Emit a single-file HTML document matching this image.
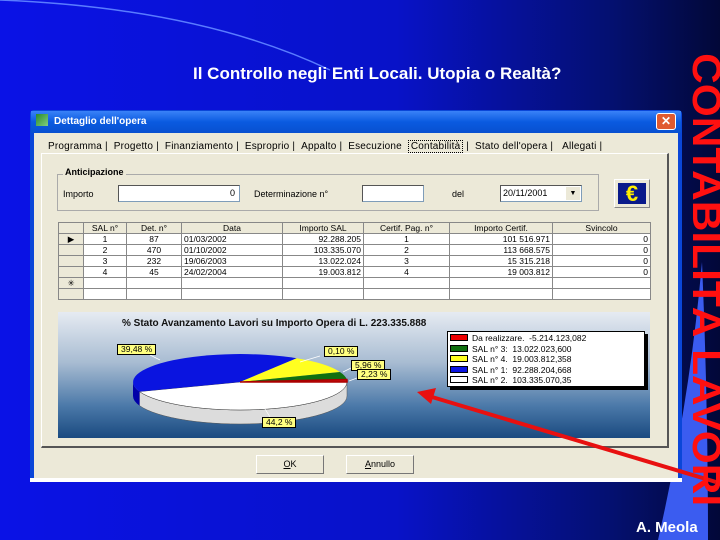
<!DOCTYPE html>
<html><head><meta charset="utf-8"><style>
*{margin:0;padding:0;box-sizing:border-box}
body{width:720px;height:540px;overflow:hidden;position:relative;font-family:"Liberation Sans",sans-serif;background:linear-gradient(90deg,#0a12e6 0%,#0812c8 55%,#041070 85%,#020838 100%)}
.a{position:absolute}
.t{font-size:9px;color:#000;white-space:nowrap}
.in{background:#fff;border:1px solid #7f9db9;border-top-color:#555;border-left-color:#555}
table{border-collapse:collapse;font-size:8.5px}
td{border:1px solid #888;height:11px;padding:0 2px;line-height:10px}
.hd td{background:#ece9d8;text-align:center}
.rh{background:#ece9d8;width:25px}
.lab{position:absolute;background:#ffff80;border:1px solid #000;font-size:8.5px;padding:0 3px;line-height:9px;height:11px}
</style></head><body>
<svg class="a" style="left:0;top:0" width="720" height="540">
<path d="M0,0 Q200,8 330,70" stroke="#5a7cff" stroke-width="1.5" fill="none"/>
<path d="M702,262 Q690,400 658,540 L708,540 Q708,400 702,262Z" fill="#3b5cf0"/>
</svg>
<div class="a" style="left:193px;top:64px;font-size:17px;font-weight:bold;color:#fff">Il Controllo negli Enti Locali. Utopia o Realtà?</div>
<div class="a" style="left:636px;top:519px;font-size:15px;font-weight:bold;color:#fff">A. Meola</div>

<!-- window -->
<div class="a" style="left:30px;top:110px;width:652px;height:372px;background:#0a46d8;border-radius:4px 4px 0 0"></div>
<div class="a" style="left:31px;top:111px;width:650px;height:22px;background:linear-gradient(#3a82f8,#0a5ae0 50%,#0850d0)"></div>
<div class="a" style="left:36px;top:114px;width:12px;height:12px;background:linear-gradient(135deg,#2a8a2a,#80d080)"></div>
<div class="a" style="left:54px;top:116px;font-size:10px;font-weight:bold;color:#fff">Dettaglio dell'opera</div>
<div class="a" style="left:656px;top:113px;width:20px;height:17px;background:#e05a30;border:1px solid #fff;border-radius:3px;color:#fff;font-size:12px;text-align:center;line-height:14px;font-weight:bold">✕</div>
<div class="a" style="left:34px;top:133px;width:644px;height:345px;background:#ece9d8"></div>
<div class="a" style="left:30px;top:478px;width:652px;height:4px;background:#fff"></div>

<!-- tabs -->
<div class="a t" style="left:48px;top:141px;font-size:10px;letter-spacing:0.2px">Programma&nbsp;|&nbsp;&nbsp;Progetto&nbsp;|&nbsp;&nbsp;Finanziamento&nbsp;|&nbsp;&nbsp;Esproprio&nbsp;|&nbsp;&nbsp;Appalto&nbsp;|&nbsp;&nbsp;Esecuzione&nbsp;&nbsp;<span style="border:1px dotted #000;padding:0 2px">Contabilità</span>&nbsp;|&nbsp;&nbsp;Stato dell'opera&nbsp;|&nbsp;&nbsp;&nbsp;Allegati&nbsp;|</div>
<div class="a" style="left:41px;top:153px;width:628px;height:295px;border-left:1px solid #fff;border-top:1px solid #fff;border-right:2px solid #555;border-bottom:2px solid #555"></div>

<!-- group -->
<div class="a" style="left:57px;top:174px;width:542px;height:37px;border:1px solid #aaa"></div>
<div class="a t" style="left:63px;top:167px;background:#ece9d8;font-weight:bold;padding:0 2px">Anticipazione</div>
<div class="a t" style="left:63px;top:189px">Importo</div>
<div class="a in" style="left:118px;top:185px;width:122px;height:17px"><span class="t" style="position:absolute;right:4px;top:2px">0</span></div>
<div class="a t" style="left:254px;top:189px">Determinazione n°</div>
<div class="a in" style="left:362px;top:185px;width:62px;height:17px"></div>
<div class="a t" style="left:452px;top:189px">del</div>
<div class="a in" style="left:500px;top:185px;width:82px;height:17px"><span class="t" style="position:absolute;left:2px;top:2px">20/11/2001</span><div class="a" style="right:1px;top:1px;width:14px;height:13px;background:#ece9d8;font-size:7px;text-align:center;line-height:13px">▼</div></div>
<div class="a" style="left:614px;top:179px;width:36px;height:29px;background:#ece9d8;border:1px solid #fff;border-right-color:#888;border-bottom-color:#888;padding:3px"><div style="width:28px;height:21px;background:#0a1a8a;color:#ffee00;font-size:22px;font-weight:bold;text-align:center;line-height:21px">€</div></div>

<!-- table -->
<table class="a" style="left:58px;top:222px;width:593px;background:#fff">
<tr class="hd"><td class="rh"></td><td style="width:43px">SAL n°</td><td style="width:55px">Det. n°</td><td style="width:101px">Data</td><td style="width:81px">Importo SAL</td><td style="width:86px">Certif. Pag. n°</td><td style="width:103px">Importo Certif.</td><td>Svincolo</td></tr>
<tr><td class="rh" style="text-align:center">▶</td><td align="center">1</td><td align="center">87</td><td>01/03/2002</td><td align="right">92.288.205</td><td align="center">1</td><td align="right">101 516.971</td><td align="right">0</td></tr>
<tr><td class="rh"></td><td align="center">2</td><td align="center">470</td><td>01/10/2002</td><td align="right">103.335.070</td><td align="center">2</td><td align="right">113 668.575</td><td align="right">0</td></tr>
<tr><td class="rh"></td><td align="center">3</td><td align="center">232</td><td>19/06/2003</td><td align="right">13.022.024</td><td align="center">3</td><td align="right">15 315.218</td><td align="right">0</td></tr>
<tr><td class="rh"></td><td align="center">4</td><td align="center">45</td><td>24/02/2004</td><td align="right">19.003.812</td><td align="center">4</td><td align="right">19 003.812</td><td align="right">0</td></tr>
<tr><td class="rh" style="text-align:center">✳</td><td></td><td></td><td></td><td></td><td></td><td></td><td></td></tr>
<tr><td class="rh"></td><td></td><td></td><td></td><td></td><td></td><td></td><td></td></tr>
</table>

<!-- chart -->
<div class="a" style="left:58px;top:312px;width:592px;height:126px;background:linear-gradient(#e6ebf2,#a8bcd2 40%,#4a78a8 75%,#1a4a80)"></div>
<div class="a" style="left:122px;top:318px;font-size:10px;font-weight:bold;color:#111">% Stato Avanzamento Lavori su Importo Opera di L. 223.335.888</div>
<svg class="a" style="left:0;top:0" width="720" height="540">
<path d="M347,382 A107 28 0 0 1 139.5,391.6 L139.5,405.6 A107 28 0 0 0 347,396Z" fill="#dcdcdc" stroke="#555" stroke-width=".5"/>
<path d="M139.5,391.6 A107 28 0 0 1 133,382 L133,396 A107 28 0 0 0 139.5,405.6Z" fill="#0000a8"/>
<path d="M240,382 L347,382 A107 28 0 0 1 139.5,391.6Z" fill="#fff" stroke="#333" stroke-width=".5"/>
<path d="M240,382 L139.5,391.6 A107 28 0 0 1 296.7,358.3Z" fill="#0a14e0"/>
<path d="M240,382 L296.7,358.3 A107 28 0 0 1 339.9,372Z" fill="#ffff20"/>
<path d="M240,382 L339.9,372 A107 28 0 0 1 346.9,379.5Z" fill="#107010"/>
<path d="M240,382 L346.9,379.5 A107 28 0 0 1 347,382Z" fill="#d01010" stroke="#a00" stroke-width="1.5"/>
<path d="M150,355 L160,360 M320,356 L300,362 M351,368 L343,372 M357,378 L349,381 M270,417 L262,404" stroke="#fff" stroke-width=".7"/>
</svg>
<div class="lab" style="left:117px;top:344px">39,48 %</div>
<div class="lab" style="left:324px;top:346px">0,10 %</div>
<div class="lab" style="left:351px;top:360px">5,96 %</div>
<div class="lab" style="left:357px;top:369px">2,23 %</div>
<div class="lab" style="left:262px;top:417px">44,2 %</div>
<div class="a" style="left:447px;top:331px;width:198px;height:56px;background:#fff;border:1px solid #000;box-shadow:3px 3px 0 #000;font-size:8.5px;line-height:10.5px;padding:1px 2px">
<div><span style="display:inline-block;width:18px;height:7px;background:#e00;border:1px solid #000;margin-right:4px"></span>Da realizzare.&nbsp; -5.214.123,082</div>
<div><span style="display:inline-block;width:18px;height:7px;background:#107010;border:1px solid #000;margin-right:4px"></span>SAL n° 3:&nbsp; 13.022.023,600</div>
<div><span style="display:inline-block;width:18px;height:7px;background:#ffff20;border:1px solid #000;margin-right:4px"></span>SAL n° 4.&nbsp; 19.003.812,358</div>
<div><span style="display:inline-block;width:18px;height:7px;background:#0a14e0;border:1px solid #000;margin-right:4px"></span>SAL n° 1:&nbsp; 92.288.204,668</div>
<div><span style="display:inline-block;width:18px;height:7px;background:#fff;border:1px solid #000;margin-right:4px"></span>SAL n° 2.&nbsp; 103.335.070,35</div>
</div>

<!-- buttons -->
<div class="a t" style="left:256px;top:455px;width:68px;height:19px;border:1px solid #fff;border-right-color:#777;border-bottom-color:#777;text-align:center;line-height:17px"><u>O</u>K</div>
<div class="a t" style="left:346px;top:455px;width:68px;height:19px;border:1px solid #fff;border-right-color:#777;border-bottom-color:#777;text-align:center;line-height:17px"><u>A</u>nnullo</div>

<!-- arrow -->
<svg class="a" style="left:0;top:0" width="720" height="540">
<line x1="716" y1="482" x2="432" y2="397" stroke="#e81010" stroke-width="4"/>
<path d="M417,392 L436,388 L431,404Z" fill="#e81010"/>
</svg>
<div class="a" style="left:706px;top:280px;width:0;height:0">
<div style="position:absolute;left:-225px;top:-22px;width:450px;height:44px;transform:rotate(90deg);font-size:40px;font-weight:900;color:#ff1010;white-space:nowrap;line-height:44px;text-align:center"><span style="display:inline-block;transform:scaleX(1.06)">CONTABILITÀ LAVORI</span></div>
</div>
</body></html>
